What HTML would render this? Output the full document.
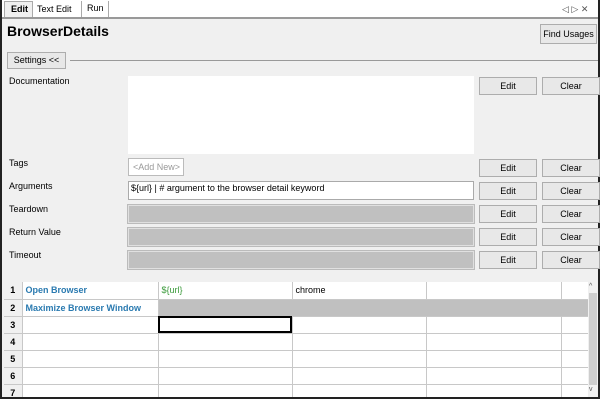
<!DOCTYPE html>
<html><head><style>
*{box-sizing:border-box;margin:0;padding:0}
body{width:600px;height:402px;background:#fff;font-family:"Liberation Sans",sans-serif;font-size:9px;color:#000;position:relative;overflow:hidden}
.a{position:absolute}
.btn{position:absolute;background:#e8e8e8;border:1px solid #adadad;text-align:center;font-size:9px;line-height:16px}
.lbl{position:absolute;left:9px;font-size:9px}
.grey{position:absolute;left:128px;width:346px;height:18px;background:#c0c0c0;border:1px solid #e0e0e0;outline:1px solid #bbb}
td{border-right:1px solid #c8c8c8;border-bottom:1px solid #c8c8c8;height:17px;padding:0 3px;font-size:9px;vertical-align:middle}
</style></head><body>
<div class="a" style="left:0;top:0;width:600px;height:402px;background:#f0f0f0;border:2px solid #222;border-top:none"></div>
<div class="a" style="left:2px;top:0;width:596px;height:17px;background:#fff"></div>
<div class="a" style="left:4px;top:1px;width:29px;height:17px;background:#f0f0f0;border:1px solid #aaa;border-bottom:none;font-weight:bold;padding-left:6px;line-height:15px">Edit</div>
<div class="a" style="left:37px;top:3px;line-height:12px">Text Edit</div>
<div class="a" style="left:81px;top:1px;height:16px;border-left:1px solid #aaa;border-right:1px solid #aaa;width:28px;padding-left:5px;line-height:15px">Run</div>
<div class="a" style="left:562px;top:3px;font-size:9px;color:#555;line-height:12px">◁ ▷ ✕</div>
<div class="a" style="left:2px;top:17px;width:596px;height:2px;background:#999"></div>
<div class="a" style="left:7px;top:22px;font-size:14px;font-weight:bold;line-height:18px">BrowserDetails</div>
<div class="btn" style="left:540px;top:24px;width:57px;height:20px;line-height:18px">Find Usages</div>
<div class="btn" style="left:7px;top:52px;width:59px;height:17px;line-height:15px">Settings &lt;&lt;</div>
<div class="a" style="left:70px;top:60px;width:528px;height:1px;background:#999"></div>
<div class="lbl" style="top:76px">Documentation</div>
<div class="a" style="left:128px;top:76px;width:346px;height:78px;background:#fff"></div>
<div class="lbl" style="top:158px">Tags</div>
<div class="a" style="left:128px;top:158px;width:56px;height:18px;background:#fff;border:1px solid #bbb;color:#999;padding-left:4px;line-height:16px">&lt;Add New&gt;</div>
<div class="lbl" style="top:181px">Arguments</div>
<div class="a" style="left:128px;top:181px;width:346px;height:19px;background:#fff;border:1px solid #aaa;padding-left:2px;line-height:13px">${url} | # argument to the browser detail keyword</div>
<div class="lbl" style="top:204px">Teardown</div>
<div class="grey" style="top:205px"></div>
<div class="lbl" style="top:227px">Return Value</div>
<div class="grey" style="top:228px"></div>
<div class="lbl" style="top:250px">Timeout</div>
<div class="grey" style="top:251px"></div>
<div class="btn" style="left:479px;top:77px;width:58px;height:18px">Edit</div><div class="btn" style="left:542px;top:77px;width:58px;height:18px">Clear</div>
<div class="btn" style="left:479px;top:159px;width:58px;height:18px">Edit</div><div class="btn" style="left:542px;top:159px;width:58px;height:18px">Clear</div>
<div class="btn" style="left:479px;top:182px;width:58px;height:18px">Edit</div><div class="btn" style="left:542px;top:182px;width:58px;height:18px">Clear</div>
<div class="btn" style="left:479px;top:205px;width:58px;height:18px">Edit</div><div class="btn" style="left:542px;top:205px;width:58px;height:18px">Clear</div>
<div class="btn" style="left:479px;top:228px;width:58px;height:18px">Edit</div><div class="btn" style="left:542px;top:228px;width:58px;height:18px">Clear</div>
<div class="btn" style="left:479px;top:251px;width:58px;height:18px">Edit</div><div class="btn" style="left:542px;top:251px;width:58px;height:18px">Clear</div>
<div class="a" style="left:4px;top:282px;width:584px;height:115px;background:#fff;overflow:hidden">
<table style="border-collapse:collapse;table-layout:fixed;width:584px">
<colgroup><col style="width:18px"><col style="width:136px"><col style="width:134px"><col style="width:134px"><col style="width:135px"><col style="width:27px"></colgroup>
<tr><td style="background:#f0f0f0;font-weight:bold;text-align:center;padding:0">1</td><td style="color:#2a7ab0;font-weight:bold">Open Browser</td><td style="color:#3a9a3a">${url}</td><td>chrome</td><td></td><td></td></tr>
<tr><td style="background:#f0f0f0;font-weight:bold;text-align:center;padding:0">2</td><td style="color:#2a7ab0;font-weight:bold">Maximize Browser Window</td><td colspan="4" style="background:#c0c0c0"></td></tr>
<tr><td style="background:#f0f0f0;font-weight:bold;text-align:center;padding:0">3</td><td></td><td style="outline:2px solid #000;outline-offset:-2px"></td><td></td><td></td><td></td></tr>
<tr><td style="background:#f0f0f0;font-weight:bold;text-align:center;padding:0">4</td><td></td><td></td><td></td><td></td><td></td></tr>
<tr><td style="background:#f0f0f0;font-weight:bold;text-align:center;padding:0">5</td><td></td><td></td><td></td><td></td><td></td></tr>
<tr><td style="background:#f0f0f0;font-weight:bold;text-align:center;padding:0">6</td><td></td><td></td><td></td><td></td><td></td></tr>
<tr><td style="background:#f0f0f0;font-weight:bold;text-align:center;padding:0">7</td><td></td><td></td><td></td><td></td><td></td></tr>
</table></div>
<div class="a" style="left:588px;top:282px;width:10px;height:115px;background:#f0f0f0"></div>
<div class="a" style="left:589px;top:293px;width:8px;height:92px;background:#cdcdcd"></div>
<div class="a" style="left:589px;top:283px;font-size:7px;color:#555">^</div>
<div class="a" style="left:589px;top:386px;font-size:7px;color:#555">v</div>
<div class="a" style="left:0;top:397px;width:600px;height:2px;background:#222"></div>
<div class="a" style="left:0;top:399px;width:600px;height:3px;background:#fff"></div>
</body></html>
